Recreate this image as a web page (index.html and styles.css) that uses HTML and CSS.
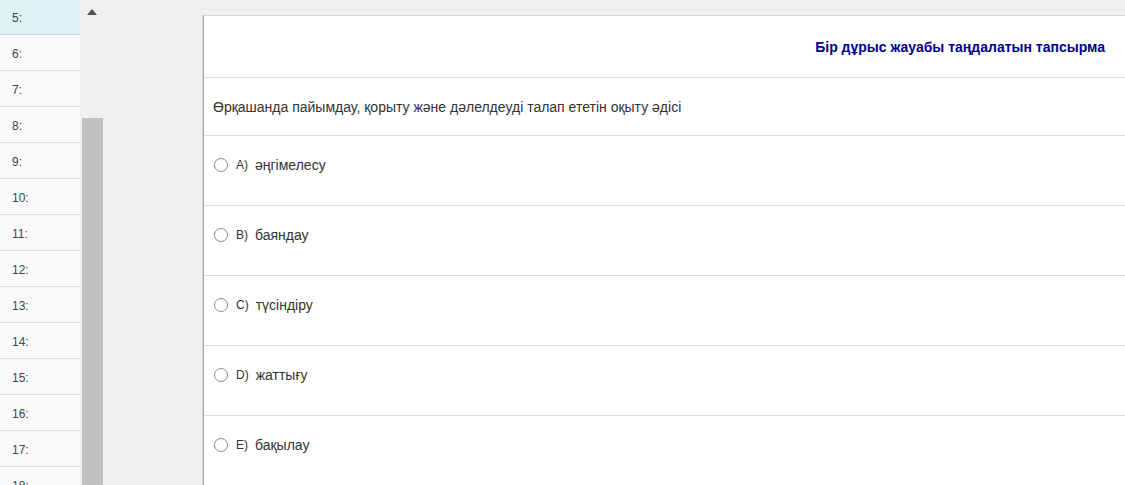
FILE: index.html
```html
<!DOCTYPE html>
<html lang="kk">
<head>
<meta charset="utf-8">
<title>Тест</title>
<link rel="stylesheet" href="styles.css">
</head>
<body>
<div class="page">
  <ul class="qlist">
    <li class="qitem active">5:</li>
    <li class="qitem">6:</li>
    <li class="qitem">7:</li>
    <li class="qitem">8:</li>
    <li class="qitem">9:</li>
    <li class="qitem">10:</li>
    <li class="qitem">11:</li>
    <li class="qitem">12:</li>
    <li class="qitem">13:</li>
    <li class="qitem">14:</li>
    <li class="qitem">15:</li>
    <li class="qitem">16:</li>
    <li class="qitem">17:</li>
    <li class="qitem last">18:</li>
  </ul>
  <div class="scrollbar">
    <div class="arrow"></div>
    <div class="thumb"></div>
  </div>
  <main class="main">
    <section class="card">
      <div class="card-head">Бір дұрыс жауабы таңдалатын тапсырма</div>
      <div class="question">Өрқашанда пайымдау, қорыту және дәлелдеуді талап ететін оқыту әдісі</div>
      <label class="option"><span class="radio"></span><span class="letter">A)</span><span class="answer">әңгімелесу</span></label>
      <label class="option"><span class="radio"></span><span class="letter">B)</span><span class="answer">баяндау</span></label>
      <label class="option"><span class="radio"></span><span class="letter">C)</span><span class="answer">түсіндіру</span></label>
      <label class="option"><span class="radio"></span><span class="letter">D)</span><span class="answer">жаттығу</span></label>
      <label class="option"><span class="radio"></span><span class="letter">E)</span><span class="answer">бақылау</span></label>
    </section>
  </main>
</div>
</body>
</html>
```

FILE: styles.css
```css
* { box-sizing: border-box; }
html, body {
  margin: 0;
  padding: 0;
  height: 485px;
  overflow: hidden;
  background: #f0f0f0;
  font-family: Arial, "Liberation Sans", sans-serif;
  color: #333;
}
.page {
  display: flex;
  height: 485px;
}
.qlist {
  list-style: none;
  margin: -1px 0 0 0;
  padding: 0;
  width: 80px;
  flex: 0 0 80px;
  background: #fafafa;
}
.qitem {
  height: 36px;
  border-bottom: 1px solid #dcdcdc;
  padding-left: 12px;
  padding-top: 2px;
  display: flex;
  align-items: center;
  font-size: 12px;
  color: #444;
}
.qitem.last {
  align-items: flex-start;
  padding-top: 12px;
}
.qitem.active {
  background: #e0f1f5;
  border-bottom-color: #c8dde2;
}
.scrollbar {
  flex: 0 0 23px;
  position: relative;
  background: #f0f0f0;
}
.arrow {
  position: absolute;
  left: 7px;
  top: 9px;
  width: 0;
  height: 0;
  border-left: 5px solid transparent;
  border-right: 5px solid transparent;
  border-bottom: 6px solid #505050;
}
.thumb {
  position: absolute;
  left: 2px;
  right: 0;
  top: 118px;
  bottom: 0;
  background: #c1c1c1;
}
.main {
  flex: 1;
  padding: 15px 0 0 100px;
  min-width: 0;
}
.card {
  background: #fff;
  border-top: 1px solid #dadada;
  border-left: 1px solid #a8a8a8;
  box-shadow: -1px 0 0 #d6d6d6;
  height: 100%;
}
.card-head {
  height: 62px;
  border-bottom: 1px solid #dcdcdc;
  display: flex;
  align-items: center;
  justify-content: flex-end;
  padding-right: 20px;
  padding-top: 1px;
  font-size: 14px;
  font-weight: bold;
  color: #00008b;
}
.question {
  height: 58px;
  border-bottom: 1px solid #dcdcdc;
  display: flex;
  align-items: center;
  padding-left: 9px;
  font-size: 14px;
  color: #333;
}
.option {
  height: 70px;
  border-bottom: 1px solid #dcdcdc;
  display: flex;
  align-items: flex-start;
  padding: 21px 0 0 10px;
  font-size: 14px;
  line-height: 16px;
  color: #333;
}
.radio {
  width: 14px;
  height: 14px;
  margin-top: 1px;
  border: 1px solid #8a8a8a;
  border-radius: 50%;
  background: #fff;
  margin-right: 8px;
  flex: 0 0 14px;
}
.letter {
  font-size: 12px;
  margin-right: 7px;
}
```
